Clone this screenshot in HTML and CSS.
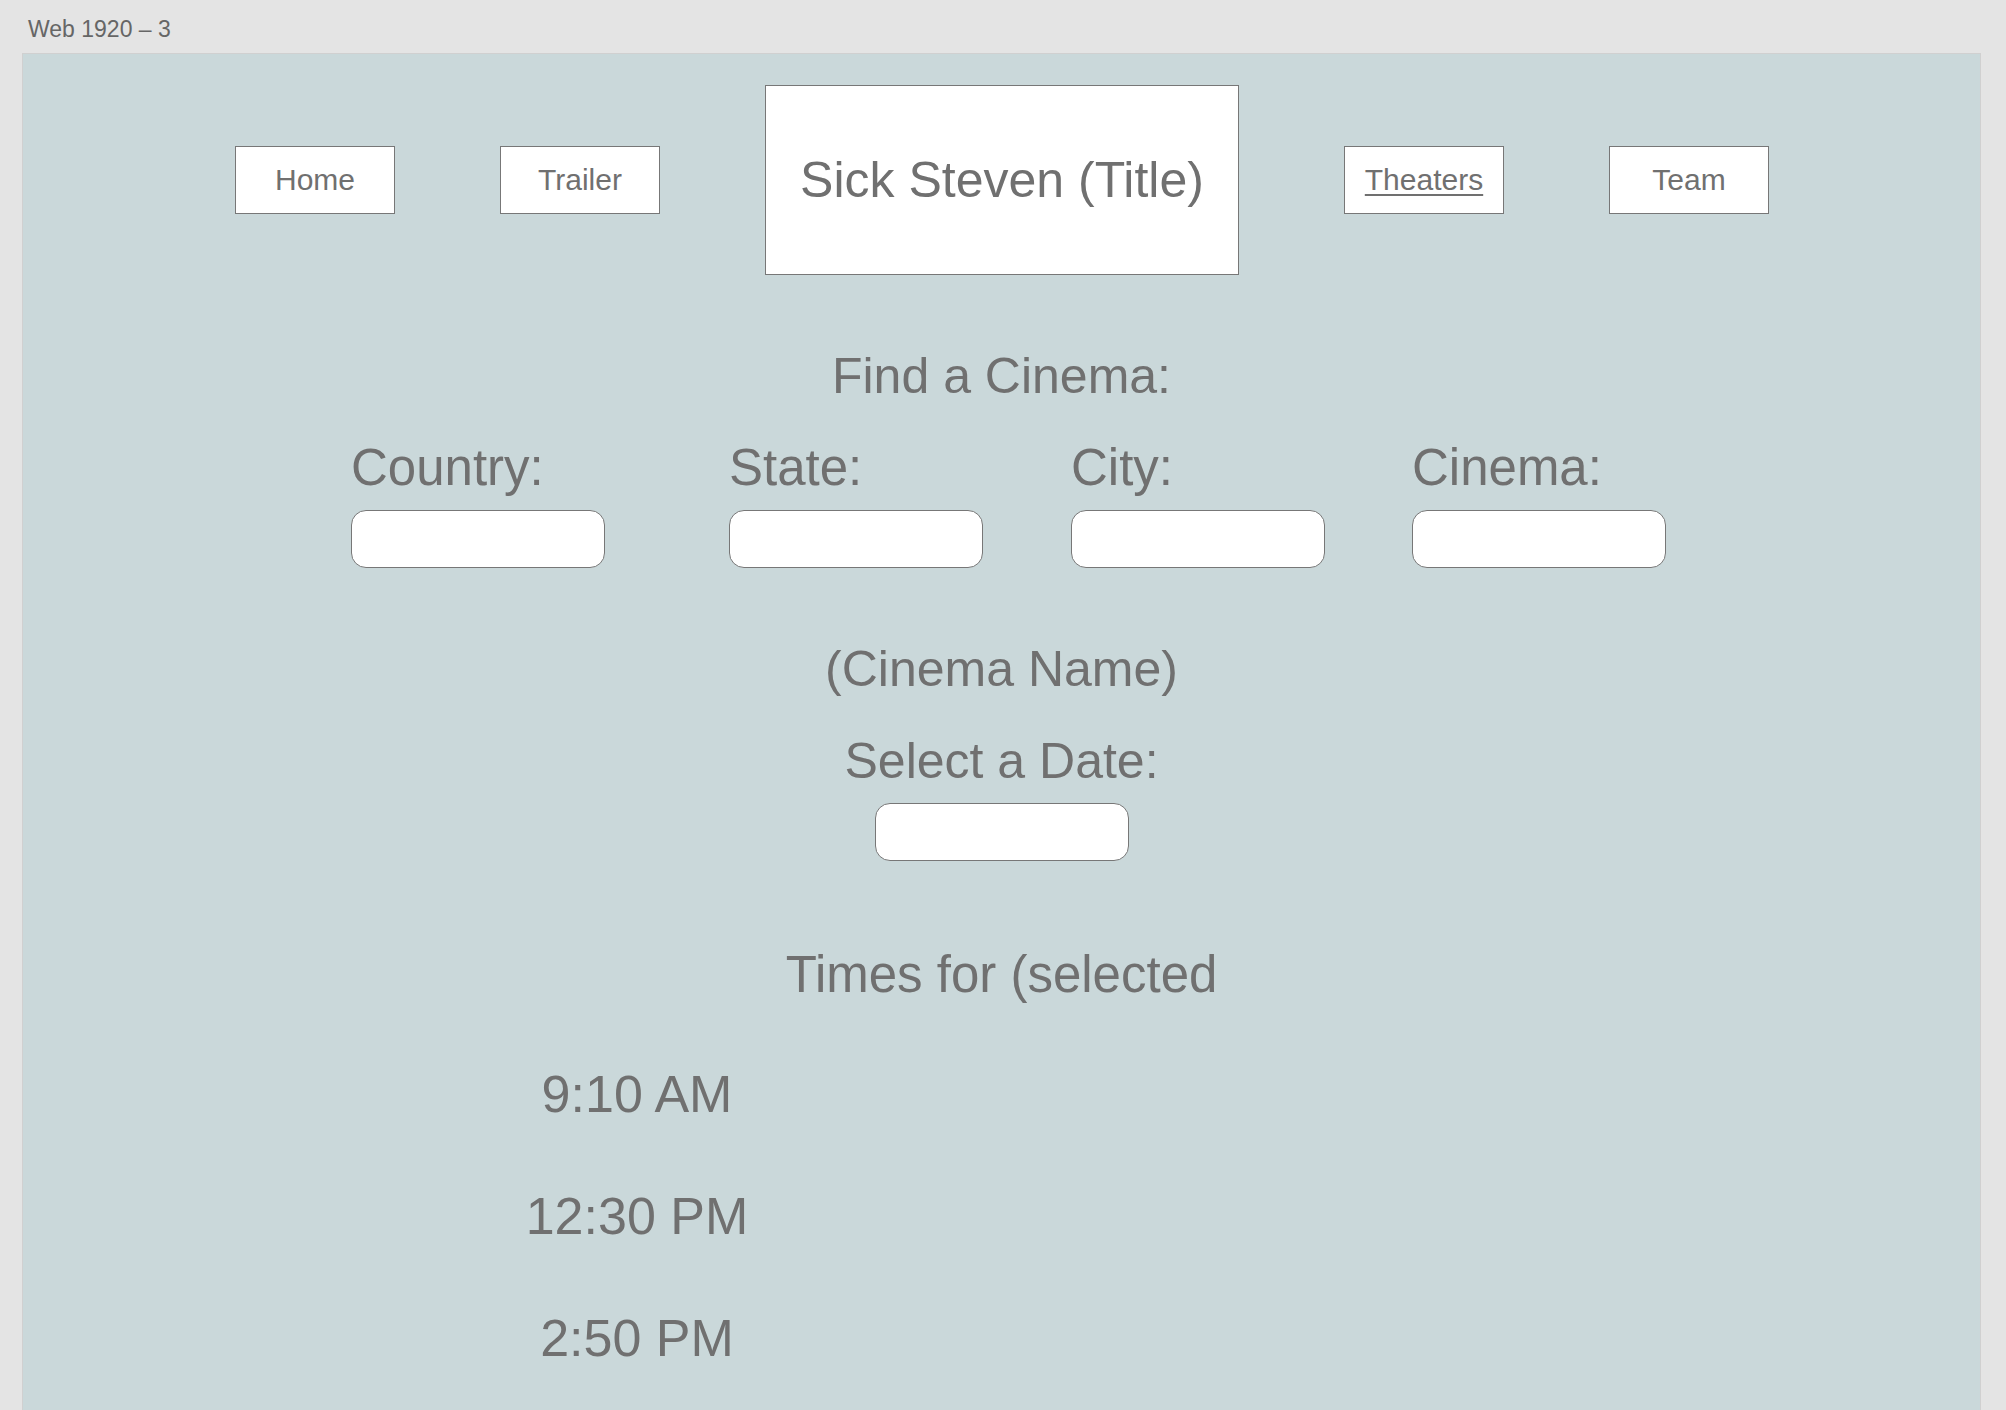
FILE: index.html
```html
<!DOCTYPE html>
<html lang="en">
<head>
<meta charset="utf-8">
<title>Web 1920 – 3</title>
<link rel="stylesheet" href="styles.css">
</head>
<body>
<div class="artboard-label">Web 1920 – 3</div>
<main class="canvas">
  <header class="nav">
    <a class="nav-box">Home</a>
    <a class="nav-box">Trailer</a>
    <div class="title-box">Sick Steven (Title)</div>
    <a class="nav-box nav-active">Theaters</a>
    <a class="nav-box">Team</a>
  </header>

  <h2 class="heading find">Find a Cinema:</h2>

  <section class="fields">
    <div class="field">
      <label class="field-label">Country:</label>
      <div class="input"></div>
    </div>
    <div class="field">
      <label class="field-label">State:</label>
      <div class="input"></div>
    </div>
    <div class="field">
      <label class="field-label">City:</label>
      <div class="input"></div>
    </div>
    <div class="field">
      <label class="field-label">Cinema:</label>
      <div class="input"></div>
    </div>
  </section>

  <h2 class="heading cinema-name">(Cinema Name)</h2>
  <h2 class="heading select-date">Select a Date:</h2>
  <div class="date-row"><div class="input"></div></div>

  <h2 class="heading times-title">Times for (selected</h2>

  <ul class="times">
    <li class="time">9:10 AM</li>
    <li class="time">12:30 PM</li>
    <li class="time">2:50 PM</li>
  </ul>
</main>
</body>
</html>
```

FILE: styles.css
```css
html, body {
  margin: 0;
  padding: 0;
  height: 100%;
  overflow: hidden;
}

body {
  background: #e4e4e4;
  font-family: "Liberation Sans", Arial, Helvetica, sans-serif;
  color: #707070;
}

.artboard-label {
  height: 53px;
  box-sizing: border-box;
  padding: 16px 0 0 28px;
  font-size: 23px;
  line-height: 26px;
  color: #666666;
}

.canvas {
  margin-left: 22px;
  width: 1959px;
  min-height: 1500px;
  box-sizing: border-box;
  background: #cad8da;
  border: 1px solid #d0d0d0;
  border-bottom: none;
  padding-top: 31px;
}

.nav {
  display: flex;
  justify-content: center;
  align-items: center;
  gap: 105px;
  padding-left: 1px;
}

.nav-box {
  width: 160px;
  height: 68px;
  box-sizing: border-box;
  background: #ffffff;
  border: 1px solid #777777;
  display: flex;
  align-items: center;
  justify-content: center;
  font-size: 30px;
  color: #707070;
  text-decoration: none;
}

.nav-active {
  text-decoration: underline;
  text-decoration-thickness: 2px;
  text-underline-offset: 4px;
}

.title-box {
  width: 474px;
  height: 190px;
  box-sizing: border-box;
  background: #ffffff;
  border: 1px solid #777777;
  display: flex;
  align-items: center;
  justify-content: center;
  font-size: 50px;
}

.heading {
  margin: 0;
  font-weight: normal;
  font-size: 50px;
  line-height: 60px;
  text-align: center;
}

.times-title {
  font-size: 51px;
}

.find {
  margin-top: 71px;
}

.fields {
  display: grid;
  grid-template-columns: 378px 342px 341px 254px;
  padding-left: 328px;
  margin-top: 32px;
}

.field {
  display: flex;
  flex-direction: column;
  gap: 12px;
}

.field-label {
  font-size: 51px;
  line-height: 60px;
}

.input {
  width: 254px;
  height: 58px;
  box-sizing: border-box;
  background: #ffffff;
  border: 1px solid #777777;
  border-radius: 15px;
}

.cinema-name {
  margin-top: 71px;
}

.select-date {
  margin-top: 32px;
}

.date-row {
  display: flex;
  justify-content: center;
  margin-top: 12px;
}

.times-title {
  margin-top: 84px;
}

.times {
  list-style: none;
  margin: 59px 0 0 464px;
  padding: 0;
  width: 300px;
  display: flex;
  flex-direction: column;
  gap: 62px;
}

.time {
  font-size: 52px;
  line-height: 60px;
  text-align: center;
}
```
